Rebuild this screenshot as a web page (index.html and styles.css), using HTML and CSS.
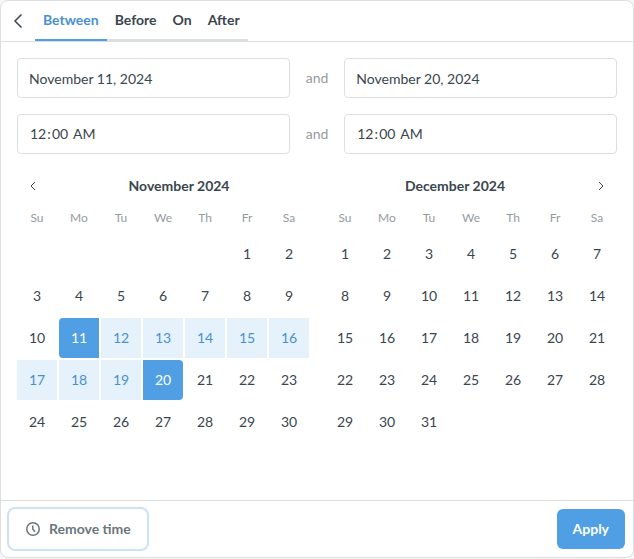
FILE: index.html
```
<!DOCTYPE html>
<html lang="en">
<head>
<meta charset="utf-8">
<meta name="viewport" content="width=device-width, initial-scale=1">
<title>Date filter</title>
<link rel="stylesheet" href="styles.css">
</head>
<body>
<form class="picker">
  <header class="picker-header">
    <button class="back" type="button" aria-label="Back">
      <svg width="10" height="16" viewBox="0 0 10 16"><path d="M8.500 1.500 2 8l6.500 6.500"/></svg>
    </button>
    <div class="tabs" role="tablist">
      <button class="tab tab-active" type="button" role="tab" aria-selected="true">Between</button>
      <button class="tab" type="button" role="tab" aria-selected="false">Before</button>
      <button class="tab" type="button" role="tab" aria-selected="false">On</button>
      <button class="tab" type="button" role="tab" aria-selected="false">After</button>
    </div>
  </header>

  <div class="picker-body">
    <div class="fields">
      <input class="field" type="text" aria-label="Start date" value="November 11, 2024">
      <span class="and">and</span>
      <input class="field" type="text" aria-label="End date" value="November 20, 2024">
      <div class="field time" role="group" aria-label="Start time">
        <input class="time-part" type="text" aria-label="Start hour" value="12">
        <span class="colon">:</span>
        <input class="time-part" type="text" aria-label="Start minute" value="00">
        <button class="meridiem" type="button">AM</button>
      </div>
      <span class="and">and</span>
      <div class="field time" role="group" aria-label="End time">
        <input class="time-part" type="text" aria-label="End hour" value="12">
        <span class="colon">:</span>
        <input class="time-part" type="text" aria-label="End minute" value="00">
        <button class="meridiem" type="button">AM</button>
      </div>
    </div>

    <div class="months">
      <section class="month">
        <div class="month-header">
          <button class="step" type="button" aria-label="Previous month"><svg width="6" height="10" viewBox="0 0 6 10"><path d="M5 1 1 5l4 4"/></svg></button>
          <h2 class="month-name">November 2024</h2>
        </div>
        <table class="days" data-start="5" data-length="30" data-from="11" data-to="20" aria-label="November 2024"></table>
      </section>
      <section class="month">
        <div class="month-header">
          <h2 class="month-name">December 2024</h2>
          <button class="step" type="button" aria-label="Next month"><svg width="6" height="10" viewBox="0 0 6 10"><path d="m1 1 4 4-4 4"/></svg></button>
        </div>
        <table class="days" data-start="0" data-length="31" aria-label="December 2024"></table>
      </section>
    </div>
  </div>

  <footer class="picker-footer">
    <button class="button button-remove" type="button">
      <svg width="16" height="16" viewBox="0 0 16 16"><circle cx="8" cy="8" r="6.250"/><path d="M7.750 4.500V8l2.250 2.750"/></svg>
      Remove time
    </button>
    <button class="button button-apply" type="submit">Apply</button>
  </footer>
</form>
<script src="calendar.js"></script>
</body>
</html>
```
FILE: styles.css
```
* {
  box-sizing: border-box;
}

body {
  margin: 0;
  background: #f6f7f7;
  color: #3a464e;
  font: 14px/20px Lato, sans-serif;
}

button,
input {
  margin: 0;
  padding: 0;
  border: 0;
  background: none;
  color: inherit;
  font: inherit;
}

button {
  cursor: pointer;
}

svg {
  display: block;
  fill: none;
  stroke: currentColor;
}

.picker {
  background: #fff;
  border: 1px solid #dcdfe0;
  border-radius: 8px;
}

.picker-header {
  display: flex;
  border-bottom: 1px solid #dcdfe0;
}

.back {
  width: 34px;
  display: flex;
  align-items: center;
  justify-content: center;
}

.back svg {
  stroke-width: 1.5;
}

.tabs {
  display: flex;
}

.tab {
  padding: 9px 8px;
  border-bottom: 2px solid #dcdfe0;
  font-weight: 700;
}

.tab-active {
  border-color: #509ee3;
  color: #4a90d0;
}

.picker-body {
  padding: 16px;
}

.fields {
  display: grid;
  grid-template-columns: 1fr auto 1fr;
  gap: 16px;
  align-items: center;
}

.field {
  width: 100%;
  min-width: 0;
  height: 40px;
  padding: 0 11px;
  border: 1px solid #dcdfe0;
  border-radius: 4px;
}

.time {
  display: flex;
  align-items: center;
}

.time-part {
  width: 18px;
  text-align: center;
}

.colon {
  width: 4px;
  text-align: center;
}

.meridiem {
  margin-left: 4px;
}

.and {
  color: #959b9f;
}

.months {
  display: flex;
  gap: 16px;
  margin-top: 16px;
}

.month {
  flex: 1;
}

.month-header {
  display: flex;
  height: 32px;
  align-items: center;
}

.month-name {
  flex: 1;
  margin: 0;
  font-size: 14px;
  font-weight: 700;
  text-align: center;
}

.step {
  width: 32px;
  height: 32px;
  display: flex;
  align-items: center;
  justify-content: center;
}

.days {
  width: calc(100% + 4px);
  margin: 0 -2px -2px;
  table-layout: fixed;
  border-spacing: 2px;
}

.days th {
  height: 28px;
  padding: 0;
  color: #959b9f;
  font-size: 12px;
  font-weight: 400;
}

.days td {
  height: 40px;
  padding: 0;
}

.day {
  display: block;
  width: 100%;
  height: 40px;
}

.day-in-range {
  background: #e5f1fb;
  color: #4a90d0;
}

.day-first,
.day-last {
  background: #509ee3;
  color: #fff;
}

.day-first {
  border-radius: 4px 0 0 4px;
}

.day-last {
  border-radius: 0 4px 4px 0;
}

.picker-footer {
  display: flex;
  justify-content: space-between;
  padding: 8px;
  border-top: 1px solid #dcdfe0;
}

.button {
  display: flex;
  align-items: center;
  gap: 8px;
  height: 40px;
  padding: 0 16px;
  border-radius: 6px;
  font-weight: 700;
}

.button-remove {
  color: #6b767c;
  outline: 2px solid #cbe2f7;
}

.button-remove svg {
  stroke-width: 1.5;
}

.button-apply {
  background: #509ee3;
  color: #fff;
}
```
FILE: calendar.js
```
const weekdays = ["Su", "Mo", "Tu", "We", "Th", "Fr", "Sa"];

document.querySelectorAll(".days").forEach((table) => {
  const { start, length, from, to } = table.dataset;
  const head = table.createTHead().insertRow();
  weekdays.forEach((name) => {
    const cell = document.createElement("th");
    cell.scope = "col";
    cell.textContent = name;
    head.append(cell);
  });

  const body = table.createTBody();
  for (let week = 0; week < 6; week++) {
    const row = body.insertRow();
    for (let column = 0; column < 7; column++) {
      const cell = row.insertCell();
      const day = week * 7 + column - start + 1;
      if (day < 1 || day > length) continue;
      const button = document.createElement("button");
      button.type = "button";
      button.className = "day";
      button.textContent = day;
      if (day >= from && day <= to) button.classList.add("day-in-range");
      if (day === Number(from)) button.classList.add("day-first");
      if (day === Number(to)) button.classList.add("day-last");
      cell.append(button);
    }
  }
});
```
